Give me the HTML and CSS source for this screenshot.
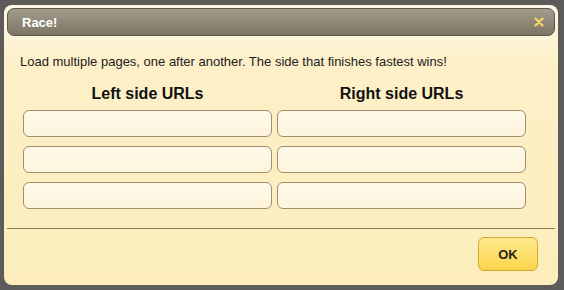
FILE: index.html
```html
<!DOCTYPE html>
<html lang="en">
<head>
<meta charset="UTF-8" />
<meta name="viewport" content="width=device-width, initial-scale=1.0" />
<title>Race!</title>
<link rel="stylesheet" href="styles.css">
</head>
<body>

<div class="dialog">
  <div class="titlebar">
    <span class="title">Race!</span>
    <svg class="close" width="10" height="10" viewBox="0 0 10 10">
      <path d="M1.5 1.5 L8.5 8.5 M8.5 1.5 L1.5 8.5" stroke="#f3d267" stroke-width="2.4" stroke-linecap="round"/>
    </svg>
  </div>

  <p class="intro">Load multiple pages, one after another. The side that finishes fastest wins!</p>

  <div class="columns">
    <div class="column">
      <h2>Left side URLs</h2>
      <input class="url" type="text">
      <input class="url" type="text">
      <input class="url" type="text">
    </div>
    <div class="column">
      <h2>Right side URLs</h2>
      <input class="url" type="text">
      <input class="url" type="text">
      <input class="url" type="text">
    </div>
  </div>

  <div class="footer">
    <button class="ok">OK</button>
  </div>
</div>

</body>
</html>
```

FILE: styles.css
```css
body {
  margin: 0;
  background-color: #5d5c5a;
  font-family: "Liberation Sans", Arial, sans-serif;
}
.dialog {
  margin: 5px 0 0 4px;
  width: 554px;
  height: 280px;
  box-sizing: border-box;
  padding: 3px;
  border-radius: 8px;
  background: linear-gradient(#fff8e8 0px, #fdf0c8 60px, #fcedbb 280px);
  display: flex;
  flex-direction: column;
}
.titlebar {
  height: 28px;
  box-sizing: border-box;
  border: 1px solid #5f5849;
  border-radius: 7px;
  background: linear-gradient(#a29c8c, #7c7566);
  display: flex;
  align-items: center;
  justify-content: space-between;
  padding: 0 10px 0 14px;
}
.title {
  color: #fff;
  font-weight: bold;
  font-size: 13px;
}
.intro {
  margin: 18px 0 0 13px;
  font-size: 13px;
  line-height: 16px;
  color: #222;
}
.columns {
  display: grid;
  grid-template-columns: 249px 249px;
  column-gap: 5px;
  margin: 14px 0 0 16px;
}
.column {
  display: flex;
  flex-direction: column;
  gap: 9px;
}
.column h2 {
  margin: 0 0 -3px;
  font-size: 16px;
  line-height: 20px;
  text-align: center;
  color: #111;
}
.url {
  height: 27px;
  box-sizing: border-box;
  margin: 0;
  border: 1px solid #a08e6c;
  border-radius: 6px;
  background: linear-gradient(#fff9ea, #fdf4dc);
}
.footer {
  margin-top: 19px;
  border-top: 1px solid #8c7c5c;
  display: flex;
  justify-content: flex-end;
  padding: 8px 17px 0 0;
}
.ok {
  width: 60px;
  height: 34px;
  border: 1px solid #d3a934;
  border-radius: 6px;
  background: linear-gradient(#fee98e, #fdd54c);
  font-family: "Liberation Sans", Arial, sans-serif;
  font-weight: bold;
  font-size: 13px;
  color: #2a2418;
  cursor: pointer;
}
```
